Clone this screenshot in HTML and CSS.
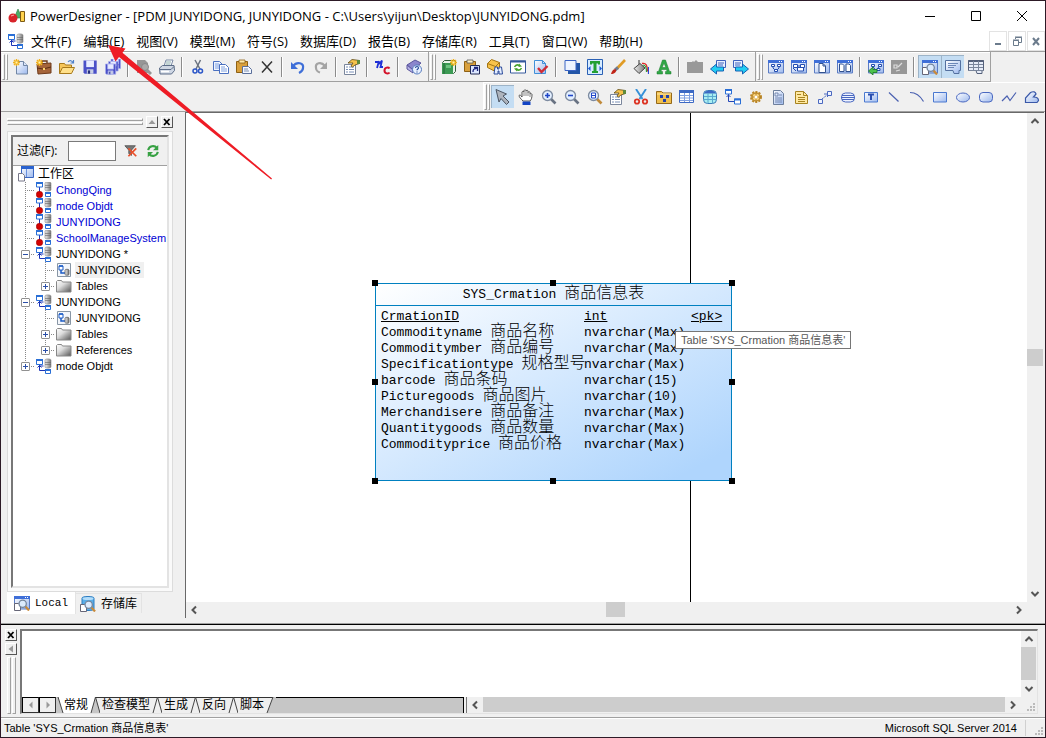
FILE: index.html
```html
<!DOCTYPE html>
<html lang="zh-CN">
<head>
<meta charset="utf-8">
<title>PowerDesigner</title>
<link rel="stylesheet" href="styles.css">
</head>
<body>
<svg class="sprite" aria-hidden="true">
  <defs>
    <linearGradient id="gb" x1="0" y1="0" x2="1" y2="1"><stop offset="0" stop-color="#fff"/><stop offset="1" stop-color="#9db9ee"/></linearGradient>
    <linearGradient id="gg" x1="0" y1="0" x2="1" y2="1"><stop offset="0" stop-color="#fff"/><stop offset=".4" stop-color="#ddd"/><stop offset="1" stop-color="#555"/></linearGradient>
    <linearGradient id="gc" x1="0" y1="0" x2="1" y2="0"><stop offset="0" stop-color="#eee"/><stop offset="1" stop-color="#777"/></linearGradient>
    <g id="star"><path d="M0 3.5h7M3.5 0v7M1 1l5 5M6 1L1 6" stroke="#f2b21c" stroke-width="1.4"/><rect x="2.5" y="2.5" width="2" height="2" fill="#fff6b0"/></g>
    <g id="win"><path d="M.5 1.500h15v12.500h-15z" fill="url(#gb)" stroke="#5b7cc4"/><path d="M0 1h16v3H0z" fill="#3f6fd8"/><path d="M11 2h1v1h-1zM13 2h1v1h-1z" fill="#fff"/></g>
    <g id="floppy"><path d="M0 0h12v12H1L0 11z" fill="#4a50c8"/><path d="M2.500 0h7v6h-7z" fill="#e8ecff"/><path d="M3 8h6v4H3z" fill="#c9cfe6"/><path d="M4 9h2v3H4z" fill="#26307c"/></g>
    <g id="lens"><path d="M8.500 8.500l4.500 5" stroke="#c98a3a" stroke-width="2.600"/><circle cx="5.500" cy="5.500" r="4.300" fill="#dcebfd" stroke="#74859c" stroke-width="1.500"/></g>
  </defs>
  <symbol id="i-app" viewBox="0 0 18 14"><path d="M7 7l3-7 4 9H8z" fill="#4cad68" stroke="#2c7a44" stroke-width=".6"/><path d="M12.500 2.500h4v10h-4z" fill="#ffd24d" stroke="#7c5a14"/><circle cx="5" cy="9" r="4.500" fill="#d8232a"/><path d="M3 7l3-1" stroke="#ff9d9d" stroke-width="1.200"/></symbol>
  <symbol id="i-model" viewBox="0 0 16 16"><path d="M3.500 6v6.500H9M3.500 8h4" fill="none" stroke="#1b34b8"/><path d="M1.500 9.500l2-2 2 2" fill="none" stroke="#1b34b8"/><path d="M.500 1.500h6v5h-6z" fill="#fff" stroke="#2a6fd6"/><path d="M0 1h7v2H0z" fill="#2a6fd6"/><path d="M9 2c0-1.500 6-1.500 6 0v7c0 1.500-6 1.500-6 0z" fill="url(#gc)" stroke="#888" stroke-width=".6"/><path d="M9 4.500h6M9 6.500h6" stroke="#666" stroke-width=".6"/><path d="M9.500 11.500h5v4h-5z" fill="#fff" stroke="#2a6fd6"/><path d="M9 11h6v2H9z" fill="#2a6fd6"/></symbol>
  <symbol id="i-closed" viewBox="0 0 16 16"><path d="M3.500 5v6" stroke="#1b34b8"/><path d="M.500 .500h6v4.500h-6z" fill="#fff" stroke="#2a6fd6"/><path d="M0 0h7v2H0z" fill="#2a6fd6"/><path d="M9 1c0-1.300 6-1.300 6 0v7c0 1.300-6 1.300-6 0z" fill="url(#gc)" stroke="#888" stroke-width=".6"/><path d="M9 3.500h6M9 5.500h6" stroke="#666" stroke-width=".6"/><path d="M9.500 10.500h5v4h-5z" fill="#fff" stroke="#2a6fd6"/><path d="M9 10h6v2H9z" fill="#2a6fd6"/><circle cx="3.500" cy="12.500" r="3.200" fill="#d40000" stroke="#a00000" stroke-width=".6"/></symbol>
  <symbol id="i-work" viewBox="0 0 16 16"><path d="M3.500 .500h12v11h-12z" fill="url(#gb)" stroke="#3a66c0"/><path d="M3 0h13v3H3z" fill="#2a62cf"/><path d="M8.500 3v8" stroke="#6a90dd"/><path d="M.500 7.500h4l2 2v5.500h-6z" fill="#fff" stroke="#778"/></symbol>
  <symbol id="i-diag" viewBox="0 0 16 16"><path d="M1.500 1.500h13v13h-13z" fill="#f3f6fb" stroke="#8896a5"/><path d="M3 4h4v4H3z" fill="#fff" stroke="#1b5bc6"/><path d="M3 4h4M5 8v3h4" fill="none" stroke="#1b5bc6" stroke-width="1.500"/><path d="M9 8c0-1 4-1 4 0v4.500c0 1-4 1-4 0z" fill="url(#gc)" stroke="#555" stroke-width=".7"/></symbol>
  <symbol id="i-folder" viewBox="0 0 16 16"><path d="M.500 3.500l1-1h4l1 1.500h8.500v10H.500z" fill="url(#gg)" stroke="#888"/></symbol>
  <symbol id="i-new" viewBox="0 0 16 16"><path d="M3.500 2.500h7l4 4v8.500h-11z" fill="url(#gb)" stroke="#7186a5"/><path d="M10.500 2.500v4h4" fill="#dbe6fa" stroke="#7186a5"/><use href="#star"/></symbol>
  <symbol id="i-case" viewBox="0 0 16 16"><path d="M6 4V2h5v2" fill="none" stroke="#6e3a1a" stroke-width="1.400"/><path d="M1 5l14-1v10l-13 1z" fill="#a5643a" stroke="#6e3a1a"/><path d="M1 9l6 1 8-2" fill="none" stroke="#5a2c10"/><path d="M7 9h2v2H7z" fill="#ffd36b"/><use href="#star"/></symbol>
  <symbol id="i-open" viewBox="0 0 16 16"><path d="M.500 14.500v-10h5l1 1.500h6v3" fill="#f6c65a" stroke="#a87a1c"/><path d="M.500 14.500l3-6h12l-3 6z" fill="#ffe08a" stroke="#a87a1c"/><path d="M9 3c2-2.500 4-1 5 .500M14.500 1v3h-3" fill="none" stroke="#4f80c8" stroke-width="1.200"/></symbol>
  <symbol id="i-save" viewBox="0 0 16 16"><use href="#floppy" transform="translate(1.500 1.500) scale(1.100)"/></symbol>
  <symbol id="i-saveall" viewBox="0 0 16 16"><g stroke="#aab0ee" stroke-width=".8"><use href="#floppy" transform="translate(6 0) scale(.8)"/><use href="#floppy" transform="translate(3.500 2.500) scale(.8)"/><use href="#floppy" transform="translate(.5 5) scale(.85)"/></g></symbol>
  <symbol id="i-preview" viewBox="0 0 16 16"><path d="M1 1h8l3 3v10H1z" fill="#969696"/><circle cx="9" cy="8" r="3.500" fill="#aaa" stroke="#888"/><path d="M11 11l4 4" stroke="#969696" stroke-width="3"/></symbol>
  <symbol id="i-print" viewBox="0 0 16 16"><path d="M5 7l2-6h7l-2 6z" fill="#fff" stroke="#7b8ca8"/><path d="M7 3h5M6.500 5h5" stroke="#8aa"/><path d="M.500 9l3-2.500h11.500l.500 5-3 3.500H1z" fill="#cfd7e4" stroke="#5c6d88"/><path d="M1 10.500h11l3-3" fill="none" stroke="#5c6d88"/><path d="M2 12.500h8" stroke="#fff" stroke-width="1.500"/></symbol>
  <symbol id="i-cut" viewBox="0 0 16 16"><path d="M5 1l5 9M10.500 1L6 10" stroke="#6a7380" stroke-width="1.500"/><circle cx="5" cy="12" r="2" fill="none" stroke="#2b56c8" stroke-width="1.500"/><circle cx="10.500" cy="12" r="2" fill="none" stroke="#2b56c8" stroke-width="1.500"/></symbol>
  <symbol id="i-copy" viewBox="0 0 16 16"><path d="M.500 2.500h6l3 3v6h-9z" fill="#eef4ff" stroke="#4b70c0"/><path d="M2 5h4M2 7h5M2 9h5" stroke="#7fa0e0"/><path d="M6.500 5.500h6l3 3v6h-9z" fill="#fff" stroke="#4b70c0"/><path d="M8 8h4M8 10h6M8 12h6" stroke="#7fa0e0"/></symbol>
  <symbol id="i-paste" viewBox="0 0 16 16"><path d="M.500 2.500h11v11h-11z" fill="#d9a03c" stroke="#8e6114"/><path d="M3 1h6v3H3z" fill="#ffe9a8" stroke="#8e6114" stroke-width=".8"/><path d="M6.500 7.500h6l3 3v4h-9z" fill="#f4f8ff" stroke="#5a6f9a"/><path d="M8 10h4M8 12h5" stroke="#7f90b0"/></symbol>
  <symbol id="i-del" viewBox="0 0 16 16"><path d="M3 2.500l10 11M13 2.500l-10 11" stroke="#333" stroke-width="1.500"/></symbol>
  <symbol id="i-undo" viewBox="0 0 16 16"><path d="M3 7c4-5 11-3 10 2 0 2-2 4-4 5" fill="none" stroke="#3f6fd8" stroke-width="2.200"/><path d="M1 3v7h7z" fill="#3f6fd8"/></symbol>
  <symbol id="i-redo" viewBox="0 0 16 16"><path d="M12 7C8 2 2 4 3 9c0 2 2 4 4 4.500" fill="none" stroke="#a4a4a4" stroke-width="2.200"/><path d="M14 3v7H7z" fill="#a4a4a4"/></symbol>
  <symbol id="i-prop" viewBox="0 0 16 16"><path d="M.500 5.500h11v10h-11z" fill="#fff" stroke="#7a869c"/><path d="M2 8h2M5 8h5M2 10.500h2M5 10.500h5M2 13h2M5 13h5" stroke="#7a90b8"/><path d="M4 4l4-3.500 4 .5 3.500.5v3L11 6 8.500 8 7 7l2-3z" fill="#f5c24c" stroke="#5e4a14" stroke-width=".8"/><path d="M13 1h3v4h-3z" fill="#5d8a3c"/></symbol>
  <symbol id="i-nc" viewBox="0 0 16 16"><path d="M2 9l2-7M0 3h3.500M4 5l3-3.500L5.500 8H8" fill="none" stroke="#1e2fd6" stroke-width="1.800"/><path d="M14.500 9.500c-1-1.500-5-1.500-5 2s4 3.500 5 2" fill="none" stroke="#d3122a" stroke-width="2"/></symbol>
  <symbol id="i-help" viewBox="0 0 16 16"><path d="M1 6l8-5 6 3-8 7z" fill="#8b86cc" stroke="#5a559c"/><path d="M1 6v4l6 4v-3z" fill="#b6b2e6" stroke="#5a559c"/><circle cx="11" cy="10.500" r="4.500" fill="#e8f1ff" stroke="#5479bd"/><path d="M9.500 9c0-2 3-2 3 0 0 1-1.500 1-1.500 2.200M11 12.500v1" fill="none" stroke="#2b4f9c" stroke-width="1.200"/></symbol>
  <symbol id="i-book" viewBox="0 0 16 16"><path d="M1.500 3.500l2-2h11v11l-2 2h-11z" fill="#e8f4ea" stroke="#365e3e"/><path d="M1 4h11v11H1z" fill="#3c9a54"/><path d="M3 4v11" stroke="#226636"/><path d="M5 6h5v3H5z" fill="#6cc480"/><use href="#star" x="9"/></symbol>
  <symbol id="i-shortcut" viewBox="0 0 16 16"><path d="M.500 2.500h11v10h-11z" fill="#d9a03c" stroke="#8e6114"/><path d="M3 1h6v3H3z" fill="#fff2c8" stroke="#555" stroke-width=".8"/><path d="M6.500 6.500h9v8.500h-9z" fill="#dce7ff" stroke="#222a55"/><path d="M9 13c0-3 1-3 4-4M10 8.500h3.500V12" fill="none" stroke="#1a237e" stroke-width="1.300"/></symbol>
  <symbol id="i-find" viewBox="0 0 16 16"><path d="M.500 4.500l4-4 8 3v7l-4 2-8-4z" fill="#f8c34a" stroke="#a37413"/><path d="M.500 4.500l8 3 4-4M8.500 7.500v5" fill="none" stroke="#a37413"/><path d="M8 8h2.500v2h1.500V8h2.500l1 7h-3.500v-3h-1v3H7z" fill="#e6efff" stroke="#2a4a9a"/></symbol>
  <symbol id="i-refreshwin" viewBox="0 0 16 16"><path d="M.500 2h15v12H.500z" fill="#fff" stroke="#35599c"/><path d="M0 1.500h16v2H0z" fill="#35599c"/><path d="M4.500 8c1-2 3-2.500 5-1.500M11.500 9c-1 2-3 2.500-5 1.500" fill="none" stroke="#49a32f" stroke-width="1.600"/><path d="M9 4.500l3 3-3.500.5zM7 12.500l-3-3 3.500-.5z" fill="#49a32f"/></symbol>
  <symbol id="i-check" viewBox="0 0 16 16"><path d="M1.500 1.500h8l3 3v10h-11z" fill="url(#gb)" stroke="#3f8fd8"/><path d="M9.500 1.500v3h3" fill="none" stroke="#3f8fd8"/><path d="M5 9l3.500 4L14.500 7" fill="none" stroke="#d02c35" stroke-width="2.400"/></symbol>
  <symbol id="i-shadow" viewBox="0 0 16 16"><path d="M4 4h12v11H4z" fill="#2356a8"/><path d="M1 1.500h11v10H1z" fill="#eef4ff" stroke="#3b64c4"/></symbol>
  <symbol id="i-tgreen" viewBox="0 0 16 16"><path d="M.500 .500h15v15H.500z" fill="#d7ecff" stroke="#2b60b4"/><path d="M3 2h10v3.500h-2V4.500H9.500V12H11v2H5v-2h1.500V4.500H5v1H3z" fill="#22a032"/><path d="M3.500 7L1 9.500 3.500 12zM12.500 7L15 9.500 12.500 12z" fill="#1c58d0"/></symbol>
  <symbol id="i-brush" viewBox="0 0 16 16"><path d="M15 1L7 9.500" stroke="#e09b25" stroke-width="2.600"/><path d="M8 8.500L5 11" stroke="#6f7c90" stroke-width="3"/><path d="M1 15c1-4 3-5.500 5-4.500C7 13 4 15 1 15z" fill="#c02418"/></symbol>
  <symbol id="i-bucket" viewBox="0 0 16 16"><path d="M6 1v6" stroke="#333"/><path d="M1 9.500l6-5 5 4.500-6 5.500z" fill="url(#gc)" stroke="#444"/><path d="M9 4.500c4-1 5.500 2 5.500 8" fill="none" stroke="#e02828" stroke-width="1.300"/><path d="M10 6c2.500 0 3.500 2 3.500 7" fill="none" stroke="#29a13a" stroke-width="1.200"/><path d="M15.500 8v7" stroke="#2f48d8" stroke-width="1.200"/></symbol>
  <symbol id="i-agreen" viewBox="0 0 16 16"><path d="M6.500 1h3l4 11.500H15v2.500H9.500v-2.500H11l-.5-2h-5l-.5 2h1.500v2.500H1v-2.500h1.500zM8 4L6.200 8.500h3.600z" fill="#2fa845" stroke="#1c7a2e" stroke-width=".5" fill-rule="evenodd"/></symbol>
  <symbol id="i-greyfold" viewBox="0 0 16 16"><path d="M0 3h5l1-1 1 1 2-2 2 2h5v11H0z" fill="#999"/></symbol>
  <symbol id="i-left" viewBox="0 0 16 16"><path d="M6.500 1.500h9v7h-9z" fill="#e8efff" stroke="#3f62bd"/><path d="M8 4h6M8 6h5" stroke="#3f62bd"/><path d="M.500 10l6-5v3h7v4h-7v3z" fill="#22cdf2" stroke="#1660b4"/></symbol>
  <symbol id="i-right" viewBox="0 0 16 16"><path d="M.500 1.500h9v7h-9z" fill="#e8efff" stroke="#3f62bd"/><path d="M2 4h6M2 6h5" stroke="#3f62bd"/><path d="M15.500 10l-6-5v3h-7v4h7v3z" fill="#22cdf2" stroke="#1660b4"/></symbol>
  <symbol id="i-w1" viewBox="0 0 16 16"><use href="#win"/><path d="M5 7v2l3 3M11 7v2l-3 3" fill="none" stroke="#234db0"/><path d="M3.500 5.500h3v2h-3zM9.500 5.500h3v2h-3zM6.500 10.500h3v2h-3z" fill="#fff" stroke="#234db0"/></symbol>
  <symbol id="i-w2" viewBox="0 0 16 16"><use href="#win"/><path d="M2.500 5.500h4v3h-4zM9.500 5.500h4v3h-4zM6.500 8.500h6v3.500h-6z" fill="#fff" stroke="#234db0"/><path d="M2 9l3 3M6 7h4" stroke="#234db0"/></symbol>
  <symbol id="i-w3" viewBox="0 0 16 16"><use href="#win"/><path d="M5 4.500h4l2.500 2.500v6.500H5z" fill="#fff" stroke="#31518f"/><path d="M9 4.500V7h2.500" fill="none" stroke="#31518f"/></symbol>
  <symbol id="i-w4" viewBox="0 0 16 16"><use href="#win"/><path d="M2.500 5h3l1.500 1.500v6h-4.500zM9 5h3l1.500 1.500v6H9z" fill="#fff" stroke="#31518f"/></symbol>
  <symbol id="i-w5" viewBox="0 0 16 16"><use href="#win"/><path d="M4.500 7l3 4M11.500 7l-3 4" fill="none" stroke="#234db0"/><path d="M3.500 5.500h3v2h-3zM10.500 5.500h3v2h-3zM9 9.500h3v2H9z" fill="#fff" stroke="#234db0"/><path d="M.500 12l4.500-4v2.500h4v3H5V16z" fill="#4cc24c" stroke="#1b7425" stroke-width=".8"/></symbol>
  <symbol id="i-w6" viewBox="0 0 16 16"><path d="M0 1h16v14H0z" fill="#979797"/><path d="M3 6h3v3H3zM7 8l4-4M5 12l4-1" fill="none" stroke="#ddd" stroke-width="1.200"/></symbol>
  <symbol id="i-browse" viewBox="0 0 16 16"><use href="#win"/><path d="M.500 8.500h4l2 2v5h-6z" fill="#fff" stroke="#667"/><g transform="translate(4 4) scale(.85)"><use href="#lens"/></g></symbol>
  <symbol id="i-dbbrowse" viewBox="0 0 16 16"><path d="M2 2c0-2 12-2 12 0v11c0 2-12 2-12 0z" fill="#5aaee8" stroke="#2d7cc0"/><ellipse cx="8" cy="2.500" rx="5.500" ry="1.500" fill="#b4ddfa"/><path d="M.500 8.500h4l2 2v5h-6z" fill="#fff" stroke="#667"/><g transform="translate(4 4) scale(.85)"><use href="#lens"/></g></symbol>
  <symbol id="i-output" viewBox="0 0 16 16"><path d="M.500 1.500h15v10h-1.500v3h-5l-1-3h-7.500z" fill="url(#gb)" stroke="#54709f"/><path d="M3 4.500h10M3 6.500h8M3 8.500h6" stroke="#6c87b8"/></symbol>
  <symbol id="i-result" viewBox="0 0 16 16"><path d="M.500 1.500h15v10h-1.500v3h-5l-1-3h-7.500z" fill="#e6ecf8" stroke="#54607a"/><path d="M.500 2h15" stroke="#54607a" stroke-width="2"/><path d="M1 5.500h14M1 8.500h14M1 11.500h14M5.500 2v9M10.500 2v9" stroke="#7a869c"/></symbol>
  <symbol id="i-point" viewBox="0 0 16 16"><path d="M1 .500l10.500 4.500-3.500 2 6 6-2.500 2.500-5.500-6-2 3.500z" fill="#aeb4bd" stroke="#4b5462"/></symbol>
  <symbol id="i-hand" viewBox="0 0 16 16"><path d="M5 12c-2-2-4-4-4-5.500 1-1 2 0 3 1.500V3c.5-1 1.500-1 2 0V1.500c.5-1 1.700-1 2 0V2c.5-1 1.700-1 2 0v1.500c.5-1 2-1 2 0V5c.5-.7 1.800-.5 2 .5 0 3-.5 5-2 6.500z" fill="#fff" stroke="#444" stroke-width=".9"/><path d="M6 3v4M8 2v5M10 3.500V7M12 5v3" stroke="#555" stroke-width=".7"/><path d="M4.500 12.500h8V16h-8z" fill="#1344c4"/></symbol>
  <symbol id="i-zin" viewBox="0 0 16 16"><path d="M9.500 9.500l5 5" stroke="#687282" stroke-width="2.600"/><circle cx="6.500" cy="6.500" r="5" fill="#e3efff" stroke="#7d8ba0" stroke-width="1.300"/><path d="M4 6.500h5M6.500 4v5" stroke="#1f46c8" stroke-width="1.600"/></symbol>
  <symbol id="i-zout" viewBox="0 0 16 16"><path d="M9.500 9.500l5 5" stroke="#687282" stroke-width="2.600"/><circle cx="6.500" cy="6.500" r="5" fill="#e3efff" stroke="#7d8ba0" stroke-width="1.300"/><path d="M4 6.500h5" stroke="#1f46c8" stroke-width="1.600"/></symbol>
  <symbol id="i-zfit" viewBox="0 0 16 16"><path d="M9.500 9.500l5 5" stroke="#c08a3a" stroke-width="2.600"/><circle cx="6.500" cy="6.500" r="5" fill="#e3efff" stroke="#7d8ba0" stroke-width="1.300"/><path d="M4.500 4h4v5h-4z M4.500 6.500h4" fill="#fff" stroke="#1f46c8"/></symbol>
  <symbol id="i-cutred" viewBox="0 0 16 16"><path d="M3 0l6.500 10M13 0L6.500 10" stroke="#3590d8" stroke-width="1.900"/><circle cx="4" cy="12.500" r="2.200" fill="none" stroke="#dc3424" stroke-width="1.800"/><circle cx="12" cy="12.500" r="2.200" fill="none" stroke="#dc3424" stroke-width="1.800"/></symbol>
  <symbol id="i-pack" viewBox="0 0 16 16"><path d="M.500 14.500v-12h5l1.500 1.500h8.500v10.500z" fill="#f0bf4e" stroke="#94691a"/><path d="M1 5h14" stroke="#ffe9a8"/><path d="M4 6h3v3H4zM10 6h3v3h-3zM7 10h3v3H7z" fill="#2341a8"/></symbol>
  <symbol id="i-table" viewBox="0 0 16 16"><path d="M.500 1.500h14v12H.500z" fill="#fff" stroke="#3c69c4"/><path d="M0 1h15v3H0z" fill="#3c69c4"/><path d="M5.500 4v9M10.500 4v9M1 6.500h13M1 9h13M1 11.500h13" stroke="#7f9fe0"/></symbol>
  <symbol id="i-view" viewBox="0 0 16 16"><rect x="1.500" y="1.500" width="13" height="13" rx="4" fill="#a8eef2" stroke="#3a7cb8"/><path d="M2 4.500c1-4 11-4 12 0z" fill="#3c69c4"/><path d="M6 4v10M10.500 4v10M2 7.500h12M2 10.500h12" stroke="#5aaad0"/></symbol>
  <symbol id="i-ref" viewBox="0 0 16 16"><path d="M3.500 5v7.500H10M1.500 8l2-2 2 2" fill="none" stroke="#2447b8"/><path d="M.500 .500h6v4.500h-6zM9.500 10h6v5h-6z" fill="#fff" stroke="#2a6fd6"/><path d="M0 0h7v2H0zM9 9.500h7v2H9z" fill="#2a6fd6"/></symbol>
  <symbol id="i-gear" viewBox="0 0 16 16"><circle cx="8" cy="8" r="5" fill="#f2c35a" stroke="#b9862a" stroke-width="2" stroke-dasharray="2 1.200"/><circle cx="8" cy="8" r="4" fill="#f8d27a" stroke="#a8741a" stroke-width=".7"/><path d="M8 4v8M4 8h8" stroke="#a8741a" stroke-width=".8"/><circle cx="8" cy="8" r="1.500" fill="#fff"/></symbol>
  <symbol id="i-file" viewBox="0 0 16 16"><path d="M2.500 1.500h7l3 3v11h-10z" fill="url(#gb)" stroke="#6d7f9c"/><path d="M4 4h3v3H4zM8 6h3M4 9h7M4 11h7M4 13h7" fill="none" stroke="#7488b0"/></symbol>
  <symbol id="i-note" viewBox="0 0 16 16"><path d="M1.500 2.500h8l4 4v8h-12z" fill="#ffe9a2" stroke="#a88420"/><path d="M9.500 2.500v4h4M4 8.500h7M4 10.500h7M4 12.500h7M3 5.500h4" fill="none" stroke="#a88420"/></symbol>
  <symbol id="i-dep" viewBox="0 0 16 16"><path d="M1.500 10.500h4v4h-4zM10.500 2.500h4v4h-4z" fill="#eef3ff" stroke="#4a68c0"/><path d="M5 10l5-4" stroke="#4a68c0" stroke-dasharray="2 1"/><path d="M7 5h3.500v3" fill="none" stroke="#4a68c0"/></symbol>
  <symbol id="i-title" viewBox="0 0 16 16"><rect x="1.500" y="4" width="13" height="9" rx="4" fill="#eef3ff" stroke="#4a68c0"/><path d="M2 6.500h12M1.500 8.500h13M2 10.500h12" stroke="#4a68c0"/></symbol>
  <symbol id="i-text" viewBox="0 0 16 16"><path d="M1.500 3.500h13v9.500h-13z" fill="url(#gb)" stroke="#4a78d0"/><path d="M5 5.500h6M8 5.500V11" stroke="#2a4fb0" stroke-width="2"/></symbol>
  <symbol id="i-line" viewBox="0 0 16 16"><path d="M3 3.500l9.500 9" stroke="#4a60b0" stroke-width="1.200"/></symbol>
  <symbol id="i-arc" viewBox="0 0 16 16"><path d="M1 3.500c6 0 10 3 13.500 9" fill="none" stroke="#4a60b0" stroke-width="1.200"/></symbol>
  <symbol id="i-rect" viewBox="0 0 16 16"><path d="M1.500 3.500h13v9.500h-13z" fill="url(#gb)" stroke="#4a78d0"/></symbol>
  <symbol id="i-ell" viewBox="0 0 16 16"><ellipse cx="8" cy="8.500" rx="6.500" ry="4.500" fill="url(#gb)" stroke="#4a68c0"/></symbol>
  <symbol id="i-round" viewBox="0 0 16 16"><rect x="1.500" y="3.500" width="13" height="9.500" rx="3.500" fill="url(#gb)" stroke="#4a68c0"/></symbol>
  <symbol id="i-poly" viewBox="0 0 16 16"><path d="M1 12l5-5 3 4.500 6-8" fill="none" stroke="#4a60b0" stroke-width="1.200"/></symbol>
  <symbol id="i-shape" viewBox="0 0 16 16"><path d="M1.500 13.500v-4.500l5-5.500c3-1.500 5-.5 5.500 1.500l-2.500 3c2.500 0 5 1 5 3.500l-1.500 2z" fill="url(#gb)" stroke="#3a58a8" stroke-width="1.200"/></symbol>
  <symbol id="i-filter" viewBox="0 0 16 16"><path d="M1 2h12L8.500 7v6l-3-2V7z" fill="#777" stroke="#555"/><path d="M5 5l9 9M14 5l-9 9" stroke="#e8502c" stroke-width="2"/></symbol>
  <symbol id="i-sync" viewBox="0 0 16 16"><path d="M2.500 7c1-5 7-6 10-2.500M13.500 9c-1 5-7 6-10 2.500" fill="none" stroke="#37a143" stroke-width="2.400"/><path d="M14 1v6H8zM2 15V9h6z" fill="#37a143"/></symbol>
  <symbol id="c-left" viewBox="0 0 16 16"><path d="M10 4.500L6.500 8l3.500 3.500" fill="none" stroke="#555" stroke-width="2"/></symbol>
  <symbol id="c-right" viewBox="0 0 16 16"><path d="M6 4.500L9.500 8 6 11.500" fill="none" stroke="#555" stroke-width="2"/></symbol>
  <symbol id="c-up" viewBox="0 0 16 16"><path d="M4.500 10L8 6.500l3.500 3.500" fill="none" stroke="#555" stroke-width="2"/></symbol>
  <symbol id="c-down" viewBox="0 0 16 16"><path d="M4.500 6L8 9.500 11.500 6" fill="none" stroke="#555" stroke-width="2"/></symbol>
  <symbol id="i-size" viewBox="0 0 12 12"><path d="M8 2h2v2H8zM5 5h2v2H5zM8 5h2v2H8zM2 8h2v2H2zM5 8h2v2H5zM8 8h2v2H8z" fill="#bbb"/></symbol>
  <symbol id="i-slash" viewBox="0 0 10 16"><path d="M1 16L5.500 0 10 16" fill="none" stroke="#444"/></symbol>
</svg>

<div class="window">
  <header class="titlebar">
    <svg class="logo"><use href="#i-app"/></svg>
    <span class="title">PowerDesigner - [PDM JUNYIDONG, JUNYIDONG - C:\Users\yijun\Desktop\JUNYIDONG.pdm]</span>
    <div class="win-buttons">
      <button aria-label="最小化"><svg viewBox="0 0 12 12"><path d="M1 6.500h10" stroke="#000"/></svg></button>
      <button aria-label="最大化"><svg viewBox="0 0 12 12"><path d="M1.500 1.500h9v9h-9z" fill="none" stroke="#000"/></svg></button>
      <button aria-label="关闭"><svg viewBox="0 0 12 12"><path d="M1 1l10 10M11 1L1 11" stroke="#000"/></svg></button>
    </div>
  </header>

  <nav class="menubar">
    <svg class="icon"><use href="#i-model"/></svg>
    <div class="menus">
      <button>文件(F)</button><button>编辑(E)</button><button>视图(V)</button><button>模型(M)</button><button>符号(S)</button><button>数据库(D)</button><button>报告(B)</button><button>存储库(R)</button><button>工具(T)</button><button>窗口(W)</button><button>帮助(H)</button>
    </div>
    <div class="mdi-buttons">
      <button aria-label="最小化子窗口"><svg viewBox="0 0 12 12"><path d="M3 9h6" stroke="#6b7b8c" stroke-width="2"/></svg></button>
      <button aria-label="还原子窗口"><svg viewBox="0 0 12 12"><path d="M4.500 4V2.500h6v5H8M4 2h7" fill="none" stroke="#6b7b8c"/><path d="M2.500 5.500h5v5h-5zM2 5h6" fill="none" stroke="#6b7b8c"/></svg></button>
      <button aria-label="关闭子窗口"><svg viewBox="0 0 12 12"><path d="M3 3l6 7M9 3l-6 7" stroke="#6b7b8c" stroke-width="2"/></svg></button>
    </div>
  </nav>

  <div class="toolrow">
    <div class="band">
      <i class="grip"></i>
      <button class="tool" aria-label="新建"><svg><use href="#i-new"/></svg></button>
      <button class="tool" aria-label="新建项目"><svg><use href="#i-case"/></svg></button>
      <button class="tool" aria-label="打开"><svg><use href="#i-open"/></svg></button>
      <button class="tool" aria-label="保存"><svg><use href="#i-save"/></svg></button>
      <button class="tool" aria-label="全部保存"><svg><use href="#i-saveall"/></svg></button>
      <i class="sep"></i>
      <button class="tool" aria-label="打印预览"><svg><use href="#i-preview"/></svg></button>
      <button class="tool" aria-label="打印"><svg><use href="#i-print"/></svg></button>
      <i class="sep"></i>
      <button class="tool" aria-label="剪切"><svg><use href="#i-cut"/></svg></button>
      <button class="tool" aria-label="复制"><svg><use href="#i-copy"/></svg></button>
      <button class="tool" aria-label="粘贴"><svg><use href="#i-paste"/></svg></button>
      <button class="tool" aria-label="删除"><svg><use href="#i-del"/></svg></button>
      <i class="sep"></i>
      <button class="tool" aria-label="撤销"><svg><use href="#i-undo"/></svg></button>
      <button class="tool" aria-label="重做"><svg><use href="#i-redo"/></svg></button>
      <i class="sep"></i>
      <button class="tool" aria-label="属性"><svg><use href="#i-prop"/></svg></button>
      <i class="sep"></i>
      <button class="tool" aria-label="名称代码"><svg><use href="#i-nc"/></svg></button>
      <i class="sep"></i>
      <button class="tool" aria-label="帮助"><svg><use href="#i-help"/></svg></button>
    </div>
    <div class="band">
      <i class="grip"></i>
      <button class="tool" aria-label="新建包"><svg><use href="#i-book"/></svg></button>
      <button class="tool" aria-label="粘贴快捷方式"><svg><use href="#i-shortcut"/></svg></button>
      <button class="tool" aria-label="查找对象"><svg><use href="#i-find"/></svg></button>
      <button class="tool" aria-label="刷新"><svg><use href="#i-refreshwin"/></svg></button>
      <button class="tool" aria-label="检查模型"><svg><use href="#i-check"/></svg></button>
      <i class="sep"></i>
      <button class="tool" aria-label="阴影"><svg><use href="#i-shadow"/></svg></button>
      <button class="tool" aria-label="调整文本"><svg><use href="#i-tgreen"/></svg></button>
      <button class="tool" aria-label="线条"><svg><use href="#i-brush"/></svg></button>
      <button class="tool" aria-label="填充"><svg><use href="#i-bucket"/></svg></button>
      <button class="tool" aria-label="字体"><svg><use href="#i-agreen"/></svg></button>
      <i class="sep"></i>
      <button class="tool" aria-label="上级"><svg><use href="#i-greyfold"/></svg></button>
      <button class="tool" aria-label="上一个"><svg><use href="#i-left"/></svg></button>
      <button class="tool" aria-label="下一个"><svg><use href="#i-right"/></svg></button>
    </div>
    <div class="band">
      <i class="grip"></i>
      <button class="tool" aria-label="概念图"><svg><use href="#i-w1"/></svg></button>
      <button class="tool" aria-label="物理图"><svg><use href="#i-w2"/></svg></button>
      <button class="tool" aria-label="报告"><svg><use href="#i-w3"/></svg></button>
      <button class="tool" aria-label="多模型报告"><svg><use href="#i-w4"/></svg></button>
      <i class="sep"></i>
      <button class="tool" aria-label="导入图"><svg><use href="#i-w5"/></svg></button>
      <button class="tool" aria-label="导出图"><svg><use href="#i-w6"/></svg></button>
      <i class="sep"></i>
      <button class="tool on" aria-label="浏览器"><svg><use href="#i-browse"/></svg></button>
      <button class="tool on" aria-label="输出"><svg><use href="#i-output"/></svg></button>
      <button class="tool" aria-label="结果列表"><svg><use href="#i-result"/></svg></button>
    </div>
  </div>

  <div class="toolrow palette">
    <div class="band">
      <i class="grip"></i>
      <button class="tool on" aria-label="指针"><svg><use href="#i-point"/></svg></button>
      <button class="tool" aria-label="抓手"><svg><use href="#i-hand"/></svg></button>
      <button class="tool" aria-label="放大"><svg><use href="#i-zin"/></svg></button>
      <button class="tool" aria-label="缩小"><svg><use href="#i-zout"/></svg></button>
      <button class="tool" aria-label="整页"><svg><use href="#i-zfit"/></svg></button>
      <button class="tool" aria-label="对象属性"><svg><use href="#i-prop"/></svg></button>
      <button class="tool" aria-label="删除图形"><svg><use href="#i-cutred"/></svg></button>
      <button class="tool" aria-label="包"><svg><use href="#i-pack"/></svg></button>
      <button class="tool" aria-label="表"><svg><use href="#i-table"/></svg></button>
      <button class="tool" aria-label="视图"><svg><use href="#i-view"/></svg></button>
      <button class="tool" aria-label="引用"><svg><use href="#i-ref"/></svg></button>
      <button class="tool" aria-label="过程"><svg><use href="#i-gear"/></svg></button>
      <button class="tool" aria-label="文件"><svg><use href="#i-file"/></svg></button>
      <button class="tool" aria-label="注释"><svg><use href="#i-note"/></svg></button>
      <button class="tool" aria-label="链接"><svg><use href="#i-dep"/></svg></button>
      <button class="tool" aria-label="标题"><svg><use href="#i-title"/></svg></button>
      <button class="tool" aria-label="文本"><svg><use href="#i-text"/></svg></button>
      <button class="tool" aria-label="直线"><svg><use href="#i-line"/></svg></button>
      <button class="tool" aria-label="弧线"><svg><use href="#i-arc"/></svg></button>
      <button class="tool" aria-label="矩形"><svg><use href="#i-rect"/></svg></button>
      <button class="tool" aria-label="椭圆"><svg><use href="#i-ell"/></svg></button>
      <button class="tool" aria-label="圆角矩形"><svg><use href="#i-round"/></svg></button>
      <button class="tool" aria-label="折线"><svg><use href="#i-poly"/></svg></button>
      <button class="tool" aria-label="多边形"><svg><use href="#i-shape"/></svg></button>
    </div>
  </div>

  <main class="workspace">
    <aside class="dock">
      <div class="dock-head">
        <i class="dock-grip"></i>
        <button class="mini" aria-label="展开"><svg viewBox="0 0 10 10"><path d="M5 3l3.500 4h-7z" fill="#999"/></svg></button>
        <button class="mini" aria-label="关闭浏览器"><svg viewBox="0 0 10 10"><path d="M2 2l5.500 6M7.500 2L2 8" stroke="#000" stroke-width="1.800"/></svg></button>
      </div>
      <div class="dock-frame">
        <div class="dock-inner">
          <div class="filter">
            <label for="filter">过滤(F):</label>
            <input id="filter" type="text">
            <button aria-label="清除过滤"><svg><use href="#i-filter"/></svg></button>
            <button aria-label="刷新树"><svg><use href="#i-sync"/></svg></button>
          </div>
          <ul class="tree">
            <li class="root"><svg><use href="#i-work"/></svg><span>工作区</span></li>
            <li class="link"><i class="g t"></i><svg><use href="#i-closed"/></svg><span>ChongQing</span></li>
            <li class="link"><i class="g t"></i><svg><use href="#i-closed"/></svg><span>mode Objdt</span></li>
            <li class="link"><i class="g t"></i><svg><use href="#i-closed"/></svg><span>JUNYIDONG</span></li>
            <li class="link"><i class="g t"></i><svg><use href="#i-closed"/></svg><span>SchoolManageSystem</span></li>
            <li><i class="g t"><button class="minus" aria-label="折叠"></button></i><svg><use href="#i-model"/></svg><span>JUNYIDONG *</span></li>
            <li><i class="g v"></i><i class="g t"></i><svg><use href="#i-diag"/></svg><span class="sel">JUNYIDONG</span></li>
            <li><i class="g v"></i><i class="g l"><button class="plus" aria-label="展开"></button></i><svg><use href="#i-folder"/></svg><span>Tables</span></li>
            <li><i class="g t"><button class="minus" aria-label="折叠"></button></i><svg><use href="#i-model"/></svg><span>JUNYIDONG</span></li>
            <li><i class="g v"></i><i class="g t"></i><svg><use href="#i-diag"/></svg><span>JUNYIDONG</span></li>
            <li><i class="g v"></i><i class="g t"><button class="plus" aria-label="展开"></button></i><svg><use href="#i-folder"/></svg><span>Tables</span></li>
            <li><i class="g v"></i><i class="g l"><button class="plus" aria-label="展开"></button></i><svg><use href="#i-folder"/></svg><span>References</span></li>
            <li><i class="g l"><button class="plus" aria-label="展开"></button></i><svg><use href="#i-model"/></svg><span>mode Objdt</span></li>
          </ul>
        </div>
      </div>
      <div class="dock-tabs">
        <button class="dtab active"><svg><use href="#i-browse"/></svg><span class="mono">Local</span></button>
        <button class="dtab"><svg><use href="#i-dbbrowse"/></svg><span>存储库</span></button>
      </div>
    </aside>

    <section class="diagram">
      <div class="canvas">
        <i class="page-edge"></i>
        <div class="entity">
          <h2><span>SYS_Crmation</span> <b>商品信息表</b></h2>
          <table>
            <tr class="pk"><td>CrmationID</td><td>int</td><td>&lt;pk&gt;</td></tr>
            <tr><td>Commodityname <b>商品名称</b></td><td>nvarchar(Max)</td><td></td></tr>
            <tr><td>Commoditymber <b>商品编号</b></td><td>nvarchar(Max)</td><td></td></tr>
            <tr><td>Specificationtype <b>规格型号</b></td><td>nvarchar(Max)</td><td></td></tr>
            <tr><td>barcode <b>商品条码</b></td><td>nvarchar(15)</td><td></td></tr>
            <tr><td>Picturegoods <b>商品图片</b></td><td>nvarchar(10)</td><td></td></tr>
            <tr><td>Merchandisere <b>商品备注</b></td><td>nvarchar(Max)</td><td></td></tr>
            <tr><td>Quantitygoods <b>商品数量</b></td><td>nvarchar(Max)</td><td></td></tr>
            <tr><td>Commodityprice <b>商品价格</b></td><td>nvarchar(Max)</td><td></td></tr>
          </table>
          <i class="h n w"></i><i class="h n c"></i><i class="h n e"></i>
          <i class="h m w"></i><i class="h m e"></i>
          <i class="h s w"></i><i class="h s c"></i><i class="h s e"></i>
        </div>
        <div class="tooltip">Table 'SYS_Crmation 商品信息表'</div>
      </div>
      <div class="vbar">
        <button aria-label="向上"><svg><use href="#c-up"/></svg></button>
        <div class="track"><i class="thumb"></i></div>
        <button aria-label="向下"><svg><use href="#c-down"/></svg></button>
      </div>
      <div class="hbar">
        <button aria-label="向左"><svg><use href="#c-left"/></svg></button>
        <div class="track"><i class="thumb"></i></div>
        <button aria-label="向右"><svg><use href="#c-right"/></svg></button>
      </div>
    </section>
  </main>

  <section class="output">
    <div class="output-side">
      <button class="mini" aria-label="关闭输出"><svg viewBox="0 0 10 10"><path d="M2 2l5.500 6M7.500 2L2 8" stroke="#000" stroke-width="1.800"/></svg></button>
      <button class="mini" aria-label="收起"><svg viewBox="0 0 10 10"><path d="M7 1.500v7L2.500 5z" fill="#999"/></svg></button>
      <i class="side-grip"></i>
    </div>
    <div class="output-box">
      <div class="output-body">
        <div class="log"></div>
        <div class="vbar">
          <button aria-label="向上"><svg><use href="#c-up"/></svg></button>
          <div class="track"><i class="thumb"></i></div>
          <button aria-label="向下"><svg><use href="#c-down"/></svg></button>
        </div>
      </div>
      <div class="output-foot">
        <div class="sheet-tabs">
          <button class="nav" aria-label="前一标签"><svg viewBox="0 0 10 10"><path d="M6.500 1.500v7L3 5z" fill="#999"/></svg></button>
          <button class="nav" aria-label="后一标签"><svg viewBox="0 0 10 10"><path d="M3.500 1.500v7L7 5z" fill="#999"/></svg></button>
          <svg class="slash first" viewBox="0 0 8 16"><path d="M0 0h2l5 16H0z" fill="#c6c6c6"/><path d="M2 0h6v16H7z" fill="#fff"/><path d="M2 0l5 16" fill="none" stroke="#444"/></svg>
          <button class="stab active">常规</button><svg class="slash" viewBox="0 0 10 16"><path d="M0 0h5.500L1 16H0z" fill="#fff"/><path d="M1 16L5.500 0 10 16" fill="#c6c6c6" stroke="#444"/></svg><button class="stab">检查模型</button><svg class="slash"><use href="#i-slash"/></svg><button class="stab">生成</button><svg class="slash"><use href="#i-slash"/></svg><button class="stab">反向</button><svg class="slash"><use href="#i-slash"/></svg><button class="stab">脚本</button><svg class="slash" viewBox="0 0 10 16"><path d="M7 0h3v16H1z" fill="#c6c6c6"/><path d="M1 16L7 0" fill="none" stroke="#444"/></svg>
          <i class="rest"></i>
        </div>
        <div class="hbar">
          <button aria-label="向左"><svg><use href="#c-left"/></svg></button>
          <div class="track"><i class="thumb"></i></div>
          <button aria-label="向右"><svg><use href="#c-right"/></svg></button>
        </div>
        <svg class="sizer"><use href="#i-size"/></svg>
      </div>
    </div>
  </section>

  <footer class="status">
    <span class="hint">Table 'SYS_Crmation 商品信息表'</span>
    <span class="dbms">Microsoft SQL Server 2014</span>
    <svg class="sizer"><use href="#i-size"/></svg>
  </footer>
</div>

<svg class="pointer" viewBox="0 0 180 150" aria-hidden="true"><path d="M8 5l17.500 3.500-3 4.300L172 138.500l-.8 1L19 17l-3.500 4.500z" fill="#ee1c25"/></svg>
</body>
</html>
```

FILE: styles.css
```css
* { box-sizing: border-box; }
html, body { height: 100%; }
body {
  margin: 0;
  position: relative;
  overflow: hidden;
  font: 12px/16px "Open Sans", "Noto Sans CJK SC", sans-serif;
  color: #000;
  background: #f0f0f0;
}
button {
  margin: 0;
  padding: 0;
  border: 0;
  background: none;
  font: inherit;
  color: inherit;
  display: flex;
  align-items: center;
  justify-content: center;
}
i, b { font-style: normal; font-weight: 400; }
svg { display: block; flex: none; width: 16px; height: 16px; }
.sprite { position: absolute; width: 0; height: 0; }

.window {
  height: 100vh;
  display: flex;
  flex-direction: column;
  border: 1px solid #2d1a26;
}

/* title and menus */
.titlebar { display: flex; align-items: center; height: 30px; flex: none; background: #fff; padding-left: 7px; font-size: 13px; }
.logo { width: 18px; height: 14px; }
.title { margin-left: 4px; flex: 1; white-space: nowrap; }
.win-buttons { display: flex; }
.win-buttons button { width: 46px; height: 28px; }
.win-buttons svg { width: 12px; height: 12px; }
.menubar { display: flex; align-items: center; height: 21px; flex: none; background: #fff; border-bottom: 1px solid #a0a0a0; padding-left: 7px; font-size: 13px; }
.menus { display: flex; gap: 12px; margin-left: 7px; flex: 1; white-space: nowrap; }
.mdi-buttons { display: flex; gap: 1px; align-self: stretch; }
.mdi-buttons button { width: 18px; border: 1px solid #e3e3e3; }
.mdi-buttons svg { width: 12px; height: 12px; }

/* tool bars */
.toolrow { display: flex; height: 30px; flex: none; }
.band { display: flex; align-items: center; padding-right: 3px; border: solid #a0a0a0; border-width: 0 1px 1px 0; box-shadow: inset 0 1px #fff; }
.palette { border-bottom: 1px solid #a0a0a0; }
.palette .band { margin-left: auto; border: 0; padding: 0 2px 0 0; box-shadow: inset 1px 1px #fff; }
.grip { width: 8px; height: 26px; flex: none; padding: 0 1px; display: flex; gap: 1px; }
.grip::before, .grip::after { content: ""; width: 3px; border: 1px solid; border-color: #fff #a0a0a0 #a0a0a0 #fff; }
.tool { width: 23px; height: 23px; flex: none; }
.tool.on { background: #c4ddf3; box-shadow: inset 1px 1px #9db4c8; }
.sep { width: 8px; height: 20px; flex: none; background: linear-gradient(90deg, #8c8c8c 1px, #fff 1px) 3px 0 / 2px 100% no-repeat; }

/* browser panel */
.workspace { flex: 1; min-height: 0; display: flex; padding-bottom: 5px; border-bottom: 1px solid #a0a0a0; }
.dock { width: 184px; flex: none; display: flex; flex-direction: column; padding: 3px 12px 4px 6px; }
.dock-head { display: flex; align-items: center; gap: 3px; height: 13px; }
.dock-grip { flex: 1; height: 7px; display: flex; flex-direction: column; gap: 1px; }
.dock-grip::before, .dock-grip::after { content: ""; height: 3px; border: 1px solid; border-color: #fff #a0a0a0 #a0a0a0 #fff; }
.mini { width: 12px; height: 12px; flex: none; border: 1px solid; border-color: #fff #555 #555 #fff; }
.mini svg { width: 10px; height: 10px; }
.dock-frame { flex: 1; min-height: 0; margin-top: 3px; border: 1px solid #dcdcdc; padding: 3px; background: #fafafa; display: flex; }
.dock-inner { flex: 1; min-width: 0; border: 2px solid; border-color: #777 #e3e3e3 #e3e3e3 #777; background: #fff; }
.filter { height: 29px; display: flex; align-items: center; background: #f0f0f0; border-bottom: 1px solid #a0a0a0; padding-left: 4px; }
.filter label { width: 52px; white-space: nowrap; }
.filter input { width: 48px; height: 20px; border: 1px solid #7a7a7a; background: #fff; padding: 0 2px; font: inherit; margin-right: 7px; }
.filter button { width: 16px; margin-right: 6px; }
.filter svg { width: 14px; height: 14px; }
.tree { list-style: none; margin: 0; padding: 0 0 0 2px; font: 11px/16px "Liberation Sans", "Noto Sans CJK SC", sans-serif; }
.tree li { display: flex; height: 16px; white-space: nowrap; }
.tree .root { font-size: 12px; padding-left: 2px; }
.tree li svg { margin: 0 3px 0 1px; }
.tree span { padding: 0 1px; }
.tree .link { color: #0000d4; }
.tree .sel { background: #f0f0f0; padding-right: 3px; }
.g { width: 20px; flex: none; display: flex; align-items: center; justify-content: center; }
.g.v, .g.t, .g.l { --dv: repeating-linear-gradient(#888 0 1px, transparent 1px 2px); --dh: repeating-linear-gradient(90deg, #888 0 1px, transparent 1px 2px); background-repeat: no-repeat; }
.g.v { background-image: var(--dv); background-size: 1px 100%; background-position: 10px 0; }
.g.t { background-image: var(--dv), var(--dh); background-size: 1px 100%, 10px 1px; background-position: 10px 0, 10px 8px; }
.g.l { background-image: var(--dv), var(--dh); background-size: 1px 8px, 10px 1px; background-position: 10px 0, 10px 8px; }
.g button { width: 9px; height: 9px; margin-left: 1px; border: 1px solid #919191; border-radius: 1px; background: linear-gradient(#2b4fa8, #2b4fa8) center / 5px 1px no-repeat, #fff; }
.g .plus { background: linear-gradient(#2b4fa8, #2b4fa8) center / 5px 1px no-repeat, linear-gradient(#2b4fa8, #2b4fa8) center / 1px 5px no-repeat, #fff; }
.dock-tabs { display: flex; align-items: flex-start; }
.dtab { height: 22px; padding: 0 7px; gap: 5px; background: #fff; border: 1px solid #e3e3e3; border-width: 0 1px 0 0; }
.dtab:not(.active) { height: 20px; margin-top: 1px; padding: 0 4px; background: #f0f0f0; border-width: 1px 1px 0 0; }
.mono { font-family: "Liberation Mono", monospace; font-size: 11px; }

/* diagram */
.diagram { flex: 1; min-width: 0; display: grid; grid-template: 1fr 16px / 1fr 17px; border: solid; border-width: 1px 0 0 1px; border-color: #696969; margin-right: 1px; background: #f0f0f0; }
.canvas { position: relative; overflow: hidden; background: #fff; }
.page-edge { position: absolute; left: 504px; top: 0; bottom: 0; width: 1px; background: #000; }
.entity { position: absolute; left: 189px; top: 170px; width: 357px; height: 198px; border: 1px solid #0080c0; background: linear-gradient(152deg, #fff, #afd5fd 92%); font: 13px/16px "Liberation Mono", "Noto Sans CJK SC", monospace; white-space: nowrap; }
.entity b { font-size: 16px; font-weight: 300; line-height: 0; }
.entity h2 { margin: 0; height: 22px; font-size: 13px; line-height: 22px; font-weight: 400; text-align: center; border-bottom: 1px solid #0080c0; }
.entity table { border-collapse: collapse; table-layout: fixed; width: 100%; margin-top: 3px; }
.entity td { padding: 0 0 0 5px; height: 16px; line-height: 16px; }
.entity td:nth-child(1) { width: 203px; }
.entity td:nth-child(2) { width: 107px; }
.entity tr { height: 16px; }
.pk td { text-decoration: underline; }
.h { position: absolute; width: 6px; height: 6px; background: #000; }
.h.n { top: -4px; } .h.m { top: 95px; } .h.s { bottom: -4px; }
.h.w { left: -4px; } .h.c { left: 174px; } .h.e { right: -4px; }
.tooltip { position: absolute; left: 489px; top: 218px; border: 1px solid #767676; background: #fff; color: #575757; padding: 0 5px; font: 11px/16px "Liberation Sans", "Noto Sans CJK SC", sans-serif; white-space: nowrap; }

/* scroll bars */
.vbar { display: flex; flex-direction: column; background: #f0f0f0; }
.hbar { display: flex; background: #f0f0f0; }
.vbar button, .hbar button { width: 16px; height: 16px; flex: none; }
.track { flex: 1; display: flex; }
.vbar .track { flex-direction: column; }
.thumb { background: #cdcdcd; flex: none; }
.diagram .vbar .thumb { height: 17px; width: 16px; margin-top: 220px; }
.diagram .hbar .thumb { width: 19px; height: 15px; margin-left: 404px; }

/* output panel */
.output { flex: none; display: flex; border-top: 1px solid #000; padding: 4px 7px 3px 4px; }
.output-side { width: 15px; display: flex; flex-direction: column; gap: 2px; }
.side-grip { flex: 1; width: 9px; margin-left: 2px; display: flex; gap: 1px; }
.side-grip::before, .side-grip::after { content: ""; width: 3px; border: 1px solid; border-color: #fff #a0a0a0 #a0a0a0 #fff; }
.output-box { flex: 1; min-width: 0; border: solid; border-width: 2px 1px 1px 2px; border-color: #777 #e3e3e3 #e3e3e3 #777; background: #fff; }
.output-body { display: flex; height: 66px; }
.log { flex: 1; }
.output .vbar .thumb { height: 33px; width: 15px; }
.output-foot { display: flex; height: 16px; background: #f0f0f0; }
.sheet-tabs { width: 43.5%; flex: none; display: flex; border-right: 1px solid #000; background: #efefef; box-shadow: inset 0 1px #333; white-space: nowrap; }
.nav { width: 17px; border: 1px solid; border-color: #000 #333 #333 #000; }
.nav svg { width: 10px; height: 10px; }
.stab { padding: 0 2px; }
.stab.active { background: #fff; padding-left: 0; }
.slash { width: 10px; }
.slash.first { width: 8px; }
.rest { flex: 1; background: #c6c6c6; box-shadow: inset 0 1px #000; }
.output .hbar { flex: 1; margin-left: 2px; border-left: 1px solid #777; }
.output .hbar .thumb { flex: 1; height: 15px; }
.sizer { width: 12px; height: 12px; align-self: flex-end; margin-left: 4px; }

.status { flex: none; height: 20px; display: flex; align-items: center; border-top: 1px solid #a0a0a0; box-shadow: inset 0 1px #fff; padding-left: 3px; font: 11px/16px "Liberation Sans", "Noto Sans CJK SC", sans-serif; }
.hint { flex: 1; }
.dbms { padding-right: 8px; border-right: 1px solid #d0d0d0; }
.status .sizer { margin-left: 7px; }

.pointer { position: absolute; left: 100px; top: 40px; width: 180px; height: 150px; pointer-events: none; }
```
